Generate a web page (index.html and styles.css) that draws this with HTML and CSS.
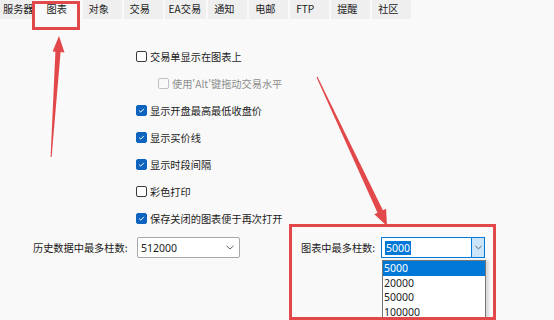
FILE: index.html
```html
<!DOCTYPE html>
<html lang="zh">
<head>
<meta charset="utf-8">
<link rel="stylesheet" href="styles.css">
</head>
<body>
<div class="tabs">
  <div class="tab first">服务器</div>
  <div class="tab active">图表</div>
  <div class="tab">对象</div>
  <div class="tab">交易</div>
  <div class="tab ea">EA交易</div>
  <div class="tab">通知</div>
  <div class="tab">电邮</div>
  <div class="tab">FTP</div>
  <div class="tab">提醒</div>
  <div class="tab">社区</div>
</div>
<div class="panel">
  <div class="checks">
    <div class="row"><span class="cb"></span><span>交易单显示在图表上</span></div>
    <div class="row sub disabled"><span class="cb"></span><span>使用'Alt'键拖动交易水平</span></div>
    <div class="row"><span class="cb on"><svg viewBox="0 0 11 11"><path d="M2.6 5.6 L4.6 7.5 L8.4 3.5" fill="none" stroke="#fff" stroke-width="1.2"/></svg></span><span>显示开盘最高最低收盘价</span></div>
    <div class="row"><span class="cb on"><svg viewBox="0 0 11 11"><path d="M2.6 5.6 L4.6 7.5 L8.4 3.5" fill="none" stroke="#fff" stroke-width="1.2"/></svg></span><span>显示买价线</span></div>
    <div class="row"><span class="cb on"><svg viewBox="0 0 11 11"><path d="M2.6 5.6 L4.6 7.5 L8.4 3.5" fill="none" stroke="#fff" stroke-width="1.2"/></svg></span><span>显示时段间隔</span></div>
    <div class="row"><span class="cb"></span><span>彩色打印</span></div>
    <div class="row"><span class="cb on"><svg viewBox="0 0 11 11"><path d="M2.6 5.6 L4.6 7.5 L8.4 3.5" fill="none" stroke="#fff" stroke-width="1.2"/></svg></span><span>保存关闭的图表便于再次打开</span></div>
  </div>
  <div class="combos">
    <span class="label left-label">历史数据中最多柱数:</span>
    <div class="combo">
      <span class="val">512000</span>
      <svg class="chev" viewBox="0 0 8 5"><path d="M0.5 0.8 L4 4 L7.5 0.8" fill="none" stroke="#666" stroke-width="1"/></svg>
    </div>
    <span class="label right-label">图表中最多柱数:</span>
    <div class="combo focus">
      <span class="val"><span class="sel">5000</span></span>
      <span class="btn"><svg class="chev" viewBox="0 0 8 5"><path d="M0.5 0.8 L4 4 L7.5 0.8" fill="none" stroke="#555" stroke-width="1"/></svg></span>
      <div class="list">
        <div class="item hi">5000</div>
        <div class="item">20000</div>
        <div class="item">50000</div>
        <div class="item">100000</div>
      </div>
    </div>
  </div>
</div>
<svg class="annot" viewBox="0 0 554 320" width="554" height="320">
  <rect x="33.5" y="2.5" width="45" height="26" fill="none" stroke="#e2474a" stroke-width="3"/>
  <polygon points="59,36 64.5,52.4 60.6,52.1 51.6,157 50.6,157 55.4,51.8 52.6,51.6" fill="#e2474a"/>
  <polygon points="387,226 374.3,214.3 377.5,212.8 316.5,77.2 317.5,76.8 382.9,210.2 386.1,208.7" fill="#e2474a"/>
  <rect x="290.5" y="225.5" width="204" height="93" fill="none" stroke="#e2474a" stroke-width="3"/>
</svg>
</body>
</html>
```

FILE: styles.css
```css
* { box-sizing: border-box; }
html, body { margin: 0; padding: 0; }
body {
  width: 554px;
  height: 320px;
  overflow: hidden;
  position: relative;
  background: #f9f9f9;
  color: #1b1b1b;
  font-family: "Noto Sans CJK SC", "Noto Sans", sans-serif;
  font-size: 10.2px;
}
.tabs {
  display: flex;
  height: 19px;
  gap: 2px;
  background: #f9f9f9;
}
.tab {
  background: #efefef;
  height: 19px;
  line-height: 18px;
  padding: 0 8px 0 6px;
  min-width: 39px;
  white-space: nowrap;
  color: #222;
}
.tab.first { padding: 0 1px 0 3px; min-width: 0; margin-right: -1px; }
.tab.active {
  background: #f9f9f9;
  padding: 0 12px 0 11px;
  width: 45px;
  min-width: 0;
  height: 21px;
  line-height: 17px;
}
.tab.ea { padding: 0 5px 0 4px; }
.panel { padding: 0; }
.checks {
  margin-top: 24px;
  padding-left: 136px;
  display: flex;
  flex-direction: column;
}
.row {
  height: 27px;
  display: flex;
  align-items: center;
  gap: 3px;
}
.row.sub { padding-left: 22px; }
.row.disabled { color: #8e8e8e; }
.cb {
  width: 11px;
  height: 11px;
  border: 1px solid #3a3a3a;
  border-radius: 2px;
  background: #fff;
  flex: none;
  display: flex;
}
.row.disabled .cb { border-color: #c2c2c2; background: #f9f9f9; }
.cb.on { background: #0e63be; border-color: #0e63be; }
.cb svg { width: 9px; height: 9px; }
.combos {
  margin-top: 5px;
  display: flex;
  align-items: center;
  height: 21px;
}
.label { white-space: nowrap; }
.left-label { margin-left: 33px; width: 95px; }
.right-label { margin-left: 61px; width: 74px; }
.combo {
  position: relative;
  height: 21px;
  border: 1px solid #a8a8a8;
  border-radius: 2px;
  background: #fff;
  display: flex;
  align-items: center;
  font-family: "Noto Sans", sans-serif;
  font-size: 10.5px;
  margin-left: 9px;
  width: 103px;
}
.combo .val { flex: 1; padding-left: 3px; }
.combo > .chev { width: 8px; height: 5px; margin-right: 5px; }
.combo.focus {
  margin-left: 6px;
  width: 104px;
  border-color: #0078d7;
  border-radius: 0;
}
.sel { background: #0078d7; color: #fff; padding: 0 1px; }
.btn {
  width: 13px;
  height: 19px;
  background: #cce4f7;
  border-left: 1px solid #0078d7;
  display: flex;
  align-items: center;
  justify-content: center;
}
.btn .chev { width: 7px; height: 5px; }
.list {
  position: absolute;
  top: 22px;
  left: 0;
  width: 104px;
  background: #fff;
  border: 1px solid #767676;
  border-bottom: none;
  box-shadow: 3px 0 2px rgba(0,0,0,0.12);
}
.item {
  height: 14.5px;
  line-height: 14px;
  padding-left: 1px;
}
.item.hi { background: #0078d7; color: #fff; }
.annot {
  position: absolute;
  left: 0;
  top: 0;
  pointer-events: none;
}
```
